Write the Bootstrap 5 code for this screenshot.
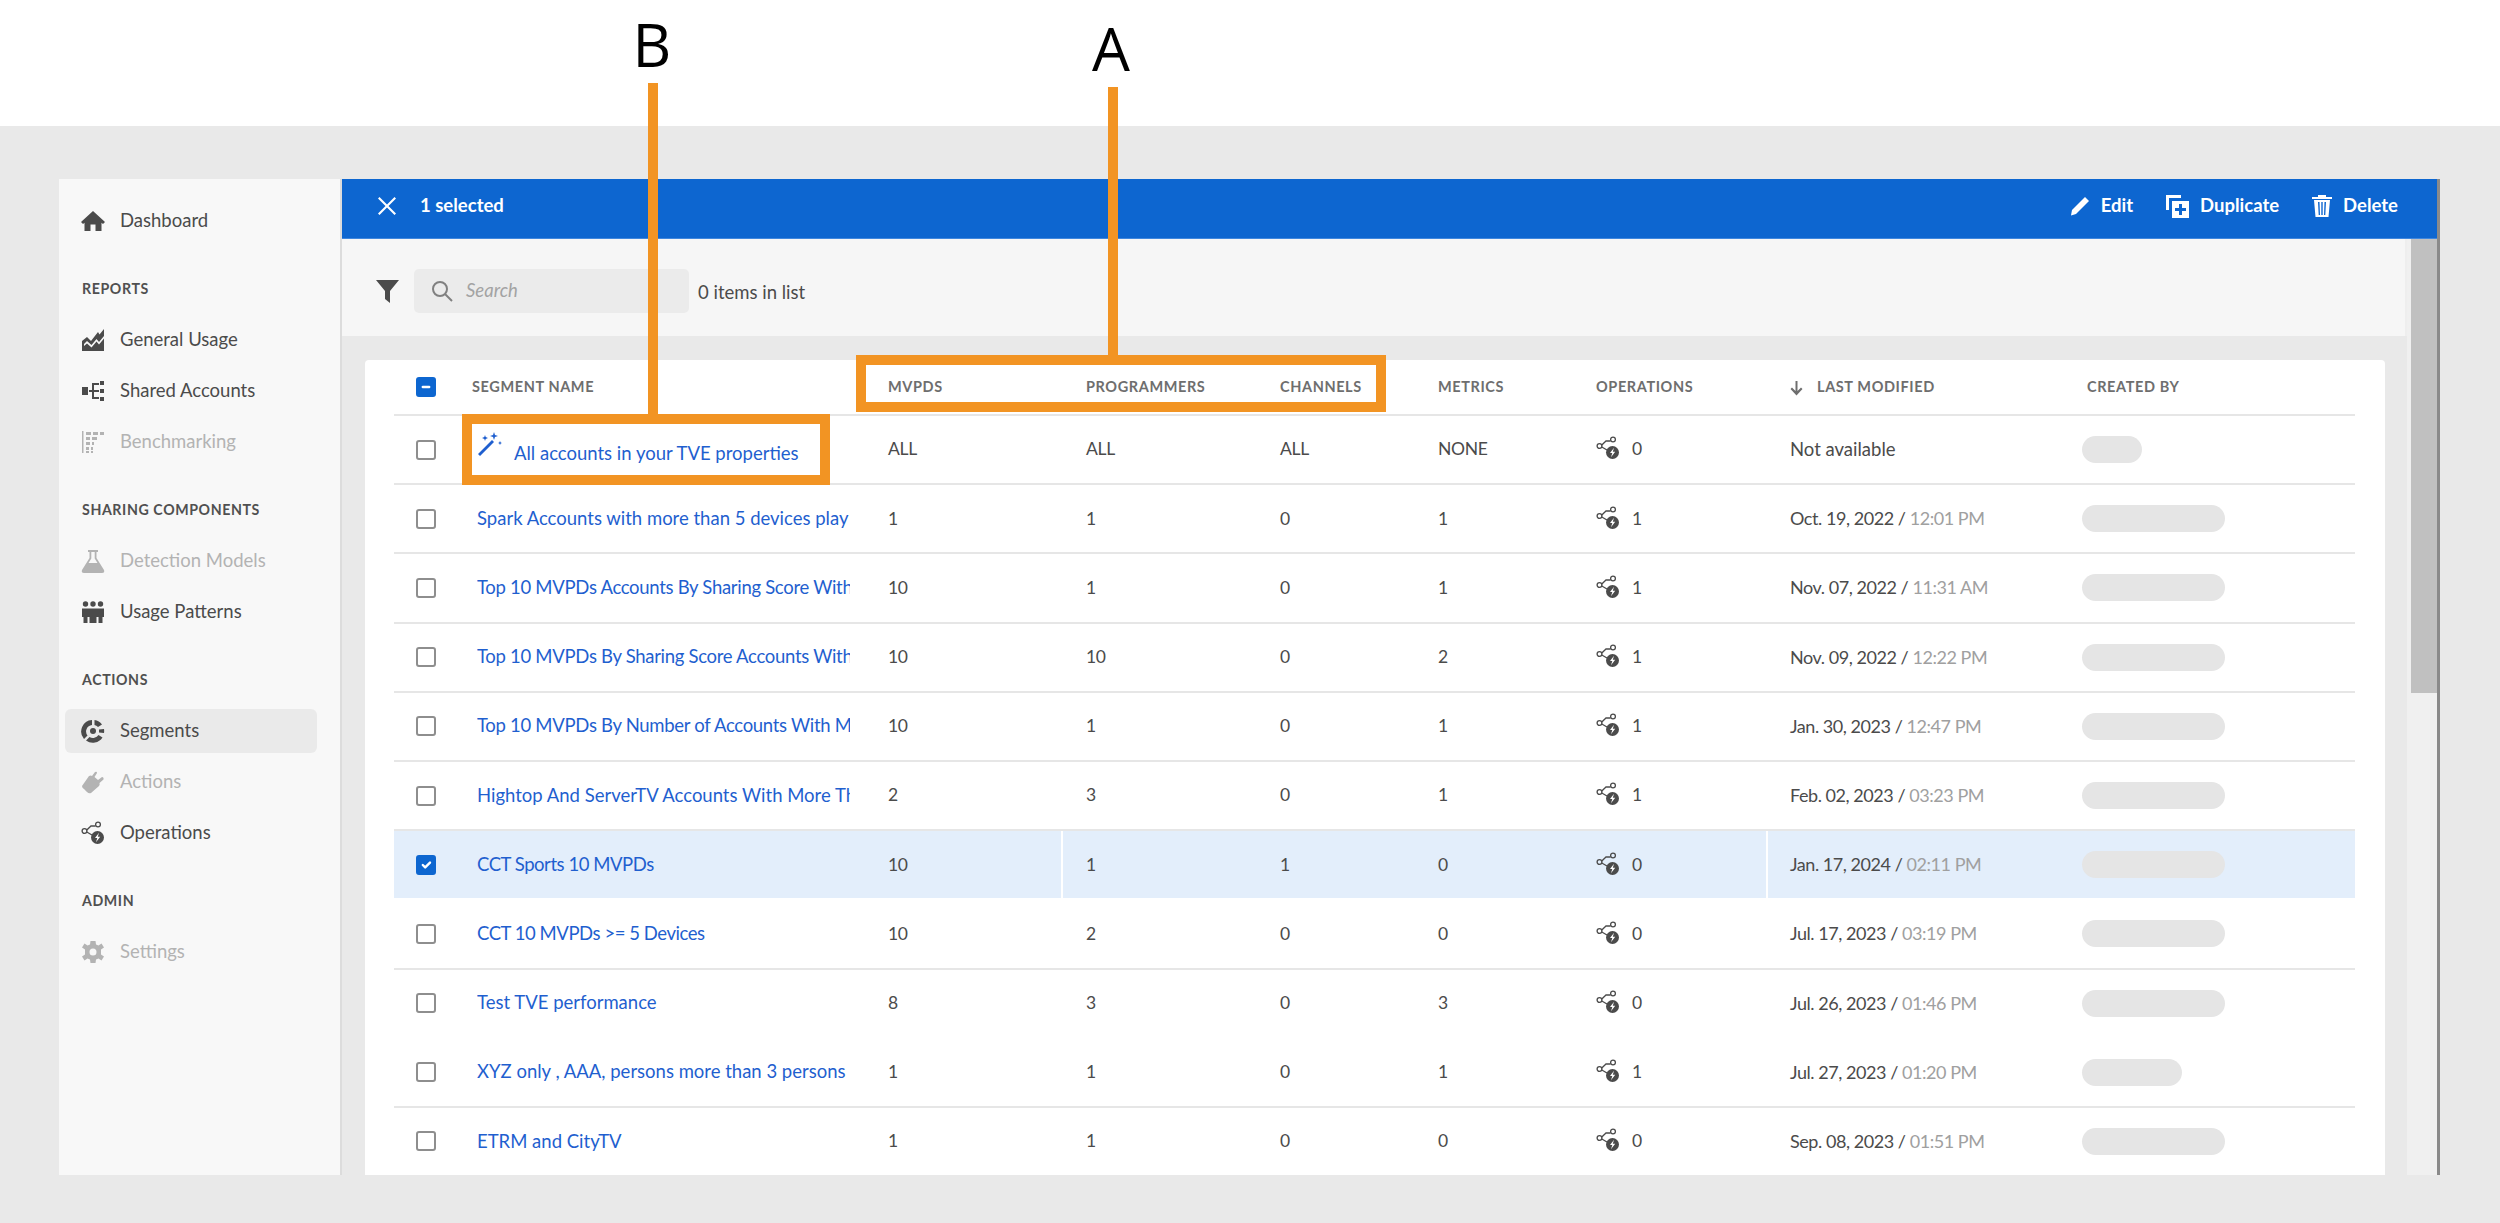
<!DOCTYPE html>
<html lang="en">
<head>
  <meta charset="UTF-8">
  <meta name="viewport" content="width=device-width, initial-scale=1.0">
  <title>Segments</title>
  <link href="https://cdn.jsdelivr.net/npm/bootstrap@5.3.2/dist/css/bootstrap.min.css" rel="stylesheet">
  <style>
    html, body { height: 1223px; overflow: hidden; }
    body { font-family: Lato, "Liberation Sans", sans-serif; font-size: 18.5px; color: #4b4b4b; background: #fff; position: relative; }
    .top-strip { height: 126px; }
    .stage { height: 1097px; background: #e9e9e9; padding: 53px 60px 48px 59px; }
    .app-shell { height: 996px; overflow: hidden; }

    .side-panel { width: 283px; flex: none; background: #f8f8f8; border-right: 2px solid #dcdcdc; padding-top: 16px; }
    .side-group { display: flex; flex-direction: column; }
    .side-group + .side-group { margin-top: 17px; }
    .side-title { height: 51px; padding-left: 23px; font-size: 14.2px; font-weight: 700; letter-spacing: .6px; color: #505050; display: flex; align-items: center; }
    .side-item { height: 44px; margin: 3.5px 23px 3.5px 6px; padding-left: 16px; gap: 15px; display: flex; align-items: center; color: #4b4b4b; border-radius: 6px; text-decoration: none; }
    .side-item svg { width: 24px; height: 24px; flex: none; fill: #4b4b4b; }
    .side-item.is-off { color: #b3b3b3; }
    .side-item.is-off svg { fill: #b3b3b3; }
    .side-item.is-on { background: #eaeaea; }

    .sel-bar { height: 60px; background: #0d66d0; color: #fff; font-weight: 700; padding: 0 39px 5px 36px; border-bottom: 1px solid #3f87de; }
    .sel-bar svg { fill: #fff; flex: none; }
    .sel-act { gap: 10px; margin-left: 32px; }
    .list-scroll { height: 936px; }
    .list-pane { flex: 1 1 auto; min-width: 0; }
    .scroll-col { width: 30px; flex: none; background: #f0f0f0; padding-left: 4px; }
    .scroll-thumb { height: 454px; width: 26px; background: #c0c0c0; }
    .scroll-edge { width: 3px; flex: none; background: #8a8a8a; }

    .tool-row { height: 97px; background: #f6f6f6; padding: 6px 0 0 34px; border-right: 2px solid #eee; }
    .search-box { width: 275px; height: 44px; margin-left: 15px; padding-left: 17px; gap: 13px; background: #ebebeb; border-radius: 5px; font-style: italic; color: #a3a3a3; }
    .item-count { margin: 4px 0 0 9px; }

    .list-card { margin: 24px 22px 0 23px; height: 815px; border: 0; border-radius: 4px 4px 0 0; padding: 0 30px 0 29px; overflow: hidden; }
    .seg-table { table-layout: fixed; width: 1961px; margin: 0; --bs-table-bg: transparent; color: #4b4b4b; }
    .seg-table th, .seg-table td { padding: 0; vertical-align: middle; border-bottom: 2px solid #e6e6e6; box-shadow: none; }
    .seg-table th { height: 55px; font-size: 14.5px; font-weight: 700; letter-spacing: .6px; color: #6e6e6e; }
    .seg-table td { height: 69.2px; font-size: 17.5px; letter-spacing: -.3px; }
    .seg-table tr.no-line td { border-bottom-color: transparent; }
    .seg-table tr.row-sel td { background: #e3eefb; position: relative; }
    .seg-table tr.row-sel td.seam-a::before, .seg-table tr.row-sel td.seam-b::before { content: ""; position: absolute; top: 0; bottom: 0; width: 2px; background: #fff; }
    .seg-table tr.row-sel td.seam-a::before { left: -25px; }
    .seg-table tr.row-sel td.seam-b::before { left: -24px; }
    .seg-table a { color: #1f5fcf; text-decoration: none; }
    .name-clip { width: 373px; margin-left: 5px; font-size: 18.5px; letter-spacing: 0; white-space: nowrap; overflow: hidden; display: block; }
    .name-clip.name-tight { letter-spacing: -.3px; }
    .name-clip.name-tighter { letter-spacing: -.45px; }
    .wand-icon { vertical-align: 3px; margin-right: 11px; }
    .sort-arrow { margin-right: 14px; }
    .form-check-input.seg-check { width: 20px; height: 20px; margin: 0 0 0 22px; display: block; border: 2px solid #8e8e8e; border-radius: 3px; }
    .form-check-input.seg-check:checked, .form-check-input.seg-check:indeterminate { background-color: #0d66d0; border-color: #0d66d0; }
    .ops-icon { width: 24px; height: 24px; margin-right: 12px; vertical-align: -5px; }
    .seg-table td.date-text { font-size: 18px; letter-spacing: -.45px; }
    .seg-table td.plain-text { font-size: 18.5px; letter-spacing: 0; }
    .time-part { color: #a0a0a0; }
    .name-pill { display: block; height: 27px; width: 143px; margin-left: -5px; border-radius: 14px; background: #e5e5e5; }
    .name-pill.pill-s { width: 60px; }
    .name-pill.pill-m { width: 100px; }

    .mark-box { position: absolute; border: 10px solid #f29423; }
    .mark-line { position: absolute; width: 10px; background: #f29423; }
    .mark-letter { position: absolute; font-family: "Open Sans", sans-serif; font-size: 60px; line-height: 60px; color: #000; width: 60px; text-align: center; }
    .box-a { left: 856px; top: 355px; width: 530px; height: 57px; }
    .box-b { left: 462px; top: 414px; width: 368px; height: 71px; }
    .line-a { left: 1108px; top: 87px; height: 268px; }
    .line-b { left: 648px; top: 83px; height: 331px; }
    .letter-a { left: 1081px; top: 18px; }
    .letter-b { left: 622px; top: 14px; }
  </style>
</head>
<body>
  <svg width="0" height="0" class="position-absolute">
    <symbol id="i-ops" viewBox="0 0 24 24">
      <circle cx="3.500" cy="10" r="2.400" fill="none" stroke="#4b4b4b" stroke-width="1.300"/>
      <circle cx="17" cy="3.500" r="2.400" fill="none" stroke="#4b4b4b" stroke-width="1.300"/>
      <path d="M5.800 9 L10 5 H14.500 M5.800 11 L11 14" fill="none" stroke="#4b4b4b" stroke-width="1.300"/>
      <circle cx="16.500" cy="16.500" r="6.500" fill="#4b4b4b"/>
      <path d="M18 11.800 L14 17 H16.300 L15 21.200 L19.200 15.800 H16.800 Z" fill="#fff"/>
    </symbol>
    <symbol id="i-home" viewBox="0 0 24 24"><path d="M12 2 L24 13 L22 15 L20.500 13.800 V22 H14.500 V15.500 H9.500 V22 H3.500 V13.800 L2 15 L0 13 Z"/></symbol>
    <symbol id="i-chart" viewBox="0 0 24 24"><path d="M1 23 V13 L6 9 L10 13 L17 4 L18.500 6.500 L23 1 V8 L18 14 L15.500 11 L10.500 17 L6 13 L3 16 V18 L6 15.500 L10.500 19.500 L15.500 13.500 L18 16.500 L23 10.500 V23 Z"/></symbol>
    <symbol id="i-tree" viewBox="0 0 24 24"><path d="M1 8 H7 V16 H1 Z M19 2 H23 V6 H19 Z M19 10 H23 V14 H19 Z M19 18 H23 V22 H19 Z M8 11 H11 V4 H18 V6 H13 V11 H18 V13 H13 V18 H18 V20 H11 V13 H8 Z"/></symbol>
    <symbol id="i-bench" viewBox="0 0 24 24"><path d="M1 1 H2.500 V23 H1 Z M5 2 H10 V5 H5 Z M12 2 H17 V5 H12 Z M19 2 H23 V5 H19 Z M5 7 H9 V10 H5 Z M11 7 H16 V10 H11 Z M5 12 H9 V15 H5 Z M11 12 H13 V15 H11 Z M5 17 H8 V20 H5 Z M10 17 H12 V20 H10 Z M5 21 H8 V23 H5 Z M10 21 H12 V23 H10 Z"/></symbol>
    <symbol id="i-flask" viewBox="0 0 24 24"><path d="M7 1 H17 V3 H15.500 V9 L23 21 Q24 24 21 24 H3 Q0 24 1 21 L8.500 9 V3 H7 Z M10.300 3 V9.500 L7.500 14 H16.500 L13.700 9.500 V3 Z" fill-rule="evenodd"/></symbol>
    <symbol id="i-people" viewBox="0 0 24 24"><circle cx="4.500" cy="4" r="2.700"/><circle cx="12" cy="4" r="2.700"/><circle cx="19.500" cy="4" r="2.700"/><path d="M1 8.500 H23 V17 H21.500 V23 H17.500 V17 H15.500 V23 H8.500 V17 H6.500 V23 H2.500 V17 H1 Z"/></symbol>
    <symbol id="i-seg" viewBox="0 0 24 24"><path d="M11 1 V6 A6.500 6.500 0 0 0 6.500 16.500 L3 20 A11.500 11.500 0 0 1 11 1 Z M13.500 1 A11 11 0 0 1 21 5.500 L17 8 A6.500 6.500 0 0 0 13.500 6 Z M18 10.500 L23 10 A12 12 0 0 1 23 14 L18 13.500 Z M17.500 16 L21.500 18.500 A11.500 11.500 0 0 1 5 21.500 L8.500 18 A6.500 6.500 0 0 0 17.500 16 Z"/><circle cx="12" cy="12" r="3"/></symbol>
    <symbol id="i-plug" viewBox="0 0 24 24"><path d="M1 16 L8 6 Q10 5 11 6 L14 2 Q16 1 16 3 L13.500 7 L17 10 L21 7 Q23 7 22.500 9.500 L18.500 13 Q19 15 18 16 L10 23 Q8 24 6 22 L3 19 Q1 18 1 16 Z"/></symbol>
    <symbol id="i-gear" viewBox="0 0 24 24"><path d="M9.500 1 H14.500 L15 4.500 L17.500 5.500 L20.500 3.500 L23 7.500 L20 9.500 V14.500 L23 16.500 L20.500 20.500 L17.500 18.500 L15 19.500 L14.500 23 H9.500 L9 19.500 L6.500 18.500 L3.500 20.500 L1 16.500 L4 14.500 V9.500 L1 7.500 L3.500 3.500 L6.500 5.500 L9 4.500 Z M12 8.500 A3.500 3.500 0 1 0 12 15.500 A3.500 3.500 0 1 0 12 8.500 Z" fill-rule="evenodd"/></symbol>
  </svg>

  <div class="top-strip"></div>
  <div class="stage">
    <div class="app-shell d-flex">
      <aside class="side-panel">
        <div class="side-group">
          <a class="side-item"><svg><use href="#i-home"/></svg>Dashboard</a>
        </div>
        <div class="side-group">
          <div class="side-title">REPORTS</div>
          <a class="side-item"><svg><use href="#i-chart"/></svg>General Usage</a>
          <a class="side-item"><svg><use href="#i-tree"/></svg>Shared Accounts</a>
          <a class="side-item is-off"><svg><use href="#i-bench"/></svg>Benchmarking</a>
        </div>
        <div class="side-group">
          <div class="side-title">SHARING COMPONENTS</div>
          <a class="side-item is-off"><svg><use href="#i-flask"/></svg>Detection Models</a>
          <a class="side-item"><svg><use href="#i-people"/></svg>Usage Patterns</a>
        </div>
        <div class="side-group">
          <div class="side-title">ACTIONS</div>
          <a class="side-item is-on"><svg><use href="#i-seg"/></svg>Segments</a>
          <a class="side-item is-off"><svg><use href="#i-plug"/></svg>Actions</a>
          <a class="side-item"><svg><use href="#i-ops"/></svg>Operations</a>
        </div>
        <div class="side-group">
          <div class="side-title">ADMIN</div>
          <a class="side-item is-off"><svg><use href="#i-gear"/></svg>Settings</a>
        </div>
      </aside>

      <main class="flex-grow-1" style="min-width:0">
        <div class="sel-bar d-flex align-items-center">
          <svg width="18" height="18" viewBox="0 0 18 18"><path d="M1.500 0 L9 7.500 L16.500 0 L18 1.500 L10.500 9 L18 16.500 L16.500 18 L9 10.500 L1.500 18 L0 16.500 L7.500 9 L0 1.500 Z"/></svg>
          <span class="ms-4">1 selected</span>
          <div class="ms-auto d-flex align-items-center">
            <span class="sel-act d-flex align-items-center">
              <svg width="22" height="22" viewBox="0 0 22 22"><path d="M16 2 L20 6 L7 19 L2 20.500 L3 15 Z"/></svg>Edit
            </span>
            <span class="sel-act d-flex align-items-center">
              <svg width="25" height="25" viewBox="0 0 25 25"><path d="M1 1 H16 V4 H4 V16 H1 Z M7 7 H24 V24 H7 Z M14 10 V14 H10 V17 H14 V21 H17 V17 H21 V14 H17 V10 Z" fill-rule="evenodd"/></svg>Duplicate
            </span>
            <span class="sel-act d-flex align-items-center">
              <svg width="22" height="24" viewBox="0 0 22 24"><path d="M1 3 H7 V1 H15 V3 H21 V5 H1 Z M3 6 H19 L17.500 23 H4.500 Z M7 8 L7.700 21 H9 L8.500 8 Z M10.300 8 V21 H11.700 V8 Z M13.500 8 L13 21 H14.300 L15 8 Z" fill-rule="evenodd"/></svg>Delete
            </span>
          </div>
        </div>

        <div class="list-scroll d-flex">
          <div class="list-pane">
            <div class="tool-row d-flex align-items-center">
              <svg width="23" height="24" viewBox="0 0 23 24" fill="#4b4b4b"><path d="M0 1 H23 L14 12 V24 L9 20 V12 Z"/></svg>
              <div class="search-box d-flex align-items-center">
                <svg width="22" height="22" viewBox="0 0 22 22" fill="none" stroke="#808080" stroke-width="2"><circle cx="9" cy="9" r="7"/><path d="M14 14 L21 21"/></svg>
                Search
              </div>
              <span class="item-count">0 items in list</span>
            </div>

            <div class="card list-card">
              <table class="table seg-table">
                <colgroup>
                  <col style="width:78px"><col style="width:416px"><col style="width:198px"><col style="width:194px"><col style="width:158px"><col style="width:158px"><col style="width:194px"><col style="width:297px"><col style="width:268px">
                </colgroup>
                <thead>
                  <tr>
                    <th><input id="checkAll" class="form-check-input seg-check" type="checkbox"></th>
                    <th>SEGMENT NAME</th><th>MVPDS</th><th>PROGRAMMERS</th><th>CHANNELS</th><th>METRICS</th><th>OPERATIONS</th>
                    <th><svg width="13" height="15" viewBox="0 0 13 15" fill="#6e6e6e" class="sort-arrow"><path d="M5.500 0 H7.500 V10 L11 6.500 L12.500 8 L6.500 14.500 L.5 8 L2 6.500 L5.500 10 Z"/></svg>LAST MODIFIED</th>
                    <th>CREATED BY</th>
                  </tr>
                </thead>
                <tbody>
                  <tr>
                    <td><input class="form-check-input seg-check" type="checkbox"></td>
                    <td><a href="#" class="name-clip"><svg width="26" height="26" viewBox="0 0 26 26" fill="#1f5fcf" class="wand-icon"><path d="M1 23 L15 9 L17 11 L3 25 Z M17 1 L18 4 L21 5 L18 6 L17 9 L16 6 L13 5 L16 4 Z M8 4 L8.700 6 L11 7 L8.700 8 L8 10 L7.300 8 L5 7 L7.300 6 Z M23 10 L23.700 11.500 L25 12 L23.700 12.500 L23 14 L22.300 12.500 L21 12 L22.300 11.500 Z"/></svg>All accounts in your TVE properties</a></td>
                    <td>ALL</td><td>ALL</td><td>ALL</td><td>NONE</td>
                    <td><svg class="ops-icon"><use href="#i-ops"/></svg>0</td>
                    <td class="plain-text">Not available</td>
                    <td><span class="name-pill pill-s"></span></td>
                  </tr>
                  <tr>
                    <td><input class="form-check-input seg-check" type="checkbox"></td>
                    <td><a href="#" class="name-clip">Spark Accounts with more than 5 devices play</a></td>
                    <td>1</td><td>1</td><td>0</td><td>1</td>
                    <td><svg class="ops-icon"><use href="#i-ops"/></svg>1</td>
                    <td class="date-text">Oct. 19, 2022 / <span class="time-part">12:01 PM</span></td>
                    <td><span class="name-pill"></span></td>
                  </tr>
                  <tr>
                    <td><input class="form-check-input seg-check" type="checkbox"></td>
                    <td><a href="#" class="name-clip name-tight">Top 10 MVPDs Accounts By Sharing Score With</a></td>
                    <td>10</td><td>1</td><td>0</td><td>1</td>
                    <td><svg class="ops-icon"><use href="#i-ops"/></svg>1</td>
                    <td class="date-text">Nov. 07, 2022 / <span class="time-part">11:31 AM</span></td>
                    <td><span class="name-pill"></span></td>
                  </tr>
                  <tr>
                    <td><input class="form-check-input seg-check" type="checkbox"></td>
                    <td><a href="#" class="name-clip name-tight">Top 10 MVPDs By Sharing Score Accounts With</a></td>
                    <td>10</td><td>10</td><td>0</td><td>2</td>
                    <td><svg class="ops-icon"><use href="#i-ops"/></svg>1</td>
                    <td class="date-text">Nov. 09, 2022 / <span class="time-part">12:22 PM</span></td>
                    <td><span class="name-pill"></span></td>
                  </tr>
                  <tr>
                    <td><input class="form-check-input seg-check" type="checkbox"></td>
                    <td><a href="#" class="name-clip name-tight">Top 10 MVPDs By Number of Accounts With M</a></td>
                    <td>10</td><td>1</td><td>0</td><td>1</td>
                    <td><svg class="ops-icon"><use href="#i-ops"/></svg>1</td>
                    <td class="date-text">Jan. 30, 2023 / <span class="time-part">12:47 PM</span></td>
                    <td><span class="name-pill"></span></td>
                  </tr>
                  <tr>
                    <td><input class="form-check-input seg-check" type="checkbox"></td>
                    <td><a href="#" class="name-clip">Hightop And ServerTV Accounts With More Th</a></td>
                    <td>2</td><td>3</td><td>0</td><td>1</td>
                    <td><svg class="ops-icon"><use href="#i-ops"/></svg>1</td>
                    <td class="date-text">Feb. 02, 2023 / <span class="time-part">03:23 PM</span></td>
                    <td><span class="name-pill"></span></td>
                  </tr>
                  <tr class="row-sel no-line">
                    <td><input class="form-check-input seg-check" type="checkbox" checked></td>
                    <td><a href="#" class="name-clip name-tighter">CCT Sports 10 MVPDs</a></td>
                    <td>10</td><td class="seam-a">1</td><td>1</td><td>0</td>
                    <td><svg class="ops-icon"><use href="#i-ops"/></svg>0</td>
                    <td class="seam-b date-text">Jan. 17, 2024 / <span class="time-part">02:11 PM</span></td>
                    <td><span class="name-pill"></span></td>
                  </tr>
                  <tr>
                    <td><input class="form-check-input seg-check" type="checkbox"></td>
                    <td><a href="#" class="name-clip name-tighter">CCT 10 MVPDs &gt;= 5 Devices</a></td>
                    <td>10</td><td>2</td><td>0</td><td>0</td>
                    <td><svg class="ops-icon"><use href="#i-ops"/></svg>0</td>
                    <td class="date-text">Jul. 17, 2023 / <span class="time-part">03:19 PM</span></td>
                    <td><span class="name-pill"></span></td>
                  </tr>
                  <tr class="no-line">
                    <td><input class="form-check-input seg-check" type="checkbox"></td>
                    <td><a href="#" class="name-clip">Test TVE performance</a></td>
                    <td>8</td><td>3</td><td>0</td><td>3</td>
                    <td><svg class="ops-icon"><use href="#i-ops"/></svg>0</td>
                    <td class="date-text">Jul. 26, 2023 / <span class="time-part">01:46 PM</span></td>
                    <td><span class="name-pill"></span></td>
                  </tr>
                  <tr>
                    <td><input class="form-check-input seg-check" type="checkbox"></td>
                    <td><a href="#" class="name-clip">XYZ only , AAA, persons more than 3 persons p</a></td>
                    <td>1</td><td>1</td><td>0</td><td>1</td>
                    <td><svg class="ops-icon"><use href="#i-ops"/></svg>1</td>
                    <td class="date-text">Jul. 27, 2023 / <span class="time-part">01:20 PM</span></td>
                    <td><span class="name-pill pill-m"></span></td>
                  </tr>
                  <tr class="no-line">
                    <td><input class="form-check-input seg-check" type="checkbox"></td>
                    <td><a href="#" class="name-clip">ETRM and CityTV</a></td>
                    <td>1</td><td>1</td><td>0</td><td>0</td>
                    <td><svg class="ops-icon"><use href="#i-ops"/></svg>0</td>
                    <td class="date-text">Sep. 08, 2023 / <span class="time-part">01:51 PM</span></td>
                    <td><span class="name-pill"></span></td>
                  </tr>
                </tbody>
              </table>
            </div>
          </div>
          <div class="scroll-col"><div class="scroll-thumb"></div></div>
        </div>
      </main>
      <div class="scroll-edge"></div>
    </div>
  </div>

  <!-- callouts drawn over the screenshot -->
  <div class="mark-line line-a"></div>
  <div class="mark-line line-b"></div>
  <div class="mark-box box-a"></div>
  <div class="mark-box box-b"></div>
  <div class="mark-letter letter-a">A</div>
  <div class="mark-letter letter-b">B</div>

  <script src="https://cdn.jsdelivr.net/npm/bootstrap@5.3.2/dist/js/bootstrap.bundle.min.js"></script>
  <script>
    document.getElementById('checkAll').indeterminate = true;
  </script>
</body>
</html>
